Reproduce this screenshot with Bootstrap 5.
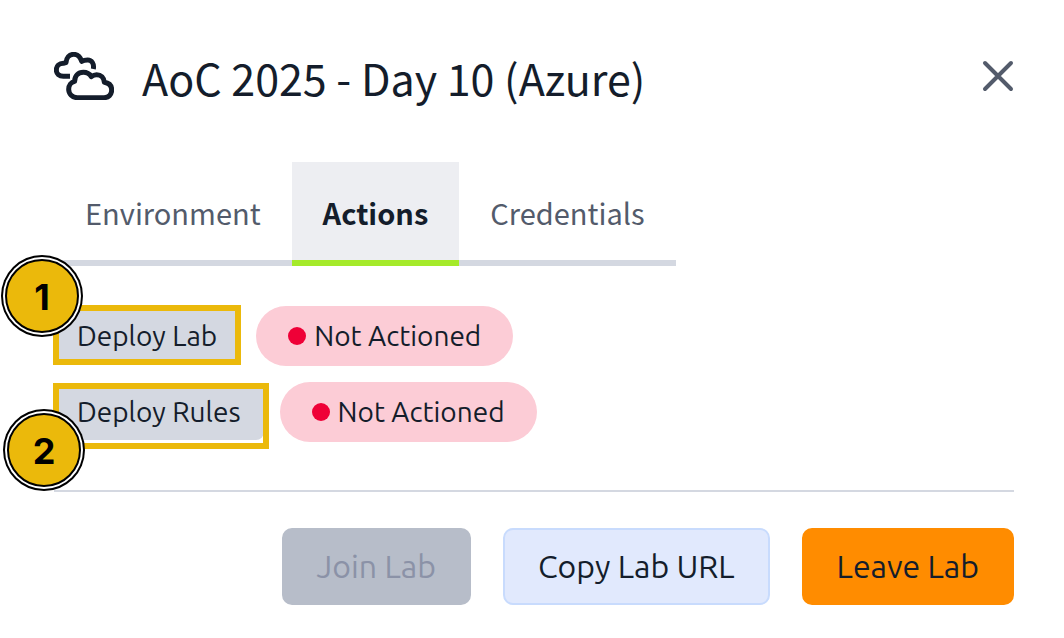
<!DOCTYPE html>
<html lang="en">
<head>
<meta charset="utf-8">
<meta name="viewport" content="width=device-width, initial-scale=1">
<title>AoC 2025 - Day 10 (Azure)</title>
<link href="https://cdn.jsdelivr.net/npm/bootstrap@5.3.0/dist/css/bootstrap.min.css" rel="stylesheet">
<style>
  :root { --ink: #141d2b; --muted: #535b6b; --line: #d4d8e1; --gold: #ebb90b; }
  body { background: #fff; color: var(--ink); font-family: Ubuntu, "Noto Sans", sans-serif; }
  .lab-panel { padding: 43px 50px 33px 54px; }
  .lab-title { font: 400 43px/64px "Source Sans Pro", "Noto Sans CJK SC", sans-serif; padding-top: 2px; }
  .lab-header { gap: 28px; margin-bottom: 53px; }
  .lab-close { color: var(--muted); line-height: 0; }
  .lab-tabs { font: 400 29px/40px "Source Sans Pro", "Noto Sans CJK SC", sans-serif; margin-bottom: 40px; }
  .lab-tabs .nav-link { background: transparent; color: var(--muted); border: 0; border-bottom: 6px solid var(--line); border-radius: 0; padding: 30px 31px 28px; }
  .lab-tabs .nav-link.active { color: var(--ink); background: #edeef2; border-color: #a5ea2a; font-weight: 700; }
  .action-btn { background: var(--line); color: var(--ink); border: 0; border-radius: 8px; font-size: 28px; line-height: 36px; padding: 10px 23px; }
  .status-pill { background: #fcccd6; height: 60px; padding: 0 32px; gap: 8px; font-size: 28px; line-height: 36px; }
  .status-dot { width: 18px; height: 18px; background: #ef0037; }
  .callout-frame { inset: -3px -1px -1px; border: 6px solid var(--gold); pointer-events: none; }
  .callout-frame.loose { inset: -1px -5px -9px -1px; }
  .callout-num { left: -49px; top: -49px; width: 74px; height: 74px; padding-top: 2px; background: var(--gold); border: 2px solid #000; box-shadow: 0 0 0 2px #fff, 0 0 0 4px #000; color: #000; font: 700 36px/36px Inter, sans-serif; z-index: 2; }
  .callout-num.below { left: -47px; top: 29px; }
  .lab-rule { border-top: 2px solid var(--line); opacity: 1; margin: 48px 0 36px; }
  .lab-footer { gap: 32px; }
  .lab-footer .btn { font-size: 32px; line-height: 40px; padding: 16px 33px 17px; border-width: 2px; border-radius: 10px; color: var(--ink); }
  .lab-footer .btn-join { background: #b7bdc9; border-color: #b7bdc9; color: #8b92a7; opacity: 1; }
  .lab-footer .btn-copy { background: #e1e9fd; border-color: #c8dbfd; }
  .lab-footer .btn-leave { background: #ff8c00; border-color: #ff8c00; }
</style>
</head>
<body>
<main class="lab-panel">
  <header class="lab-header d-flex align-items-center">
    <svg width="60" height="48" viewBox="42 36 180 144" fill="none" stroke="#141d2b" stroke-width="15" stroke-linecap="round" stroke-linejoin="round" class="flex-shrink-0" aria-hidden="true">
      <path d="M112 173C97 173 86 162 86 148C86 135 94 126 104 124C104 108 115 97 130 97C141 97 149 102 154 110C159 106 164 104 170 104C183 104 192 113 193 127C206 129 215 137 215 150C215 164 205 173 192 173Z"/>
      <path stroke-linecap="butt" d="M90 109L70 109C58 109 49 101 49 90C49 78 58 70 70 70L78 68C79 53 88 43 101 43C114 43 121 51 125 64C130 61 136 60 143 60C155 60 163 71 160 87"/>
    </svg>
    <h1 class="lab-title mb-0 flex-grow-1">AoC 2025 - Day 10 (Azure)</h1>
    <button type="button" class="lab-close btn border-0 p-0" aria-label="Close">
      <svg width="32" height="32" viewBox="0 0 32 32" stroke="currentColor" stroke-width="4" stroke-linecap="round" aria-hidden="true"><path d="M3 3L29 29M29 3L3 29"/></svg>
    </button>
  </header>

  <div class="lab-tabs nav" role="tablist">
    <button type="button" class="nav-link" role="tab" aria-selected="false">Environment</button>
    <button type="button" class="nav-link active" role="tab" aria-selected="true">Actions</button>
    <button type="button" class="nav-link" role="tab" aria-selected="false">Credentials</button>
  </div>

  <section class="d-flex flex-column gap-3">
    <div class="d-flex align-items-center gap-3">
      <div class="position-relative">
        <button type="button" class="action-btn btn">Deploy Lab</button>
        <span class="callout-frame position-absolute"></span>
        <span class="callout-num position-absolute rounded-circle d-flex align-items-center justify-content-center">1</span>
      </div>
      <span class="status-pill rounded-pill d-flex align-items-center"><span class="status-dot rounded-circle"></span>Not Actioned</span>
    </div>
    <div class="d-flex align-items-center gap-3">
      <div class="position-relative">
        <button type="button" class="action-btn btn">Deploy Rules</button>
        <span class="callout-frame loose position-absolute"></span>
        <span class="callout-num below position-absolute rounded-circle d-flex align-items-center justify-content-center">2</span>
      </div>
      <span class="status-pill rounded-pill d-flex align-items-center"><span class="status-dot rounded-circle"></span>Not Actioned</span>
    </div>
  </section>

  <hr class="lab-rule">

  <footer class="lab-footer d-flex flex-wrap justify-content-end">
    <button type="button" class="btn btn-join" disabled>Join Lab</button>
    <button type="button" class="btn btn-copy">Copy Lab URL</button>
    <button type="button" class="btn btn-leave">Leave Lab</button>
  </footer>
</main>
<script src="https://cdn.jsdelivr.net/npm/bootstrap@5.3.0/dist/js/bootstrap.bundle.min.js"></script>
</body>
</html>
